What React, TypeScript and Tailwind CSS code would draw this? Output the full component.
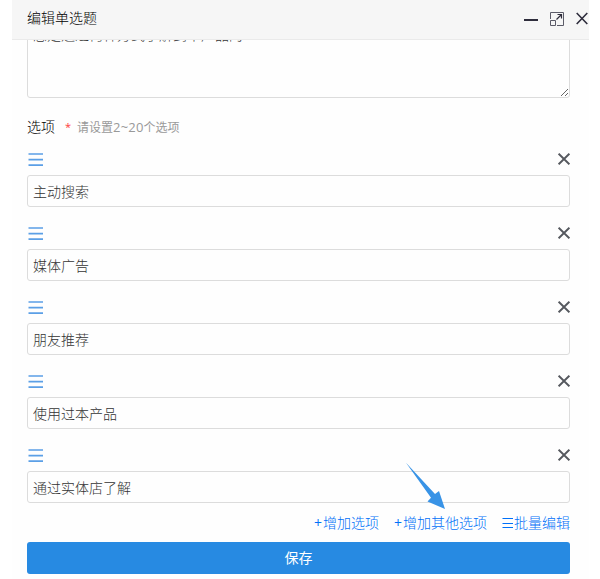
import React, { useState } from "react";

interface OptionItemProps {
  value: string;
  onChange: (value: string) => void;
  onRemove: () => void;
}

const OptionItem: React.FC<OptionItemProps> = ({ value, onChange, onRemove }) => {
  return (
    <div>
      <div className="flex h-8 items-center justify-between">
        <svg width="16" height="14" viewBox="0 0 16 14" className="mt-px ml-px cursor-move" fill="none" stroke="#5b9fe6" strokeWidth="1.7">
          <path d="M0.5 1H15M0.5 6.7H15M0.5 12.2H15" />
        </svg>
        <button type="button" onClick={onRemove} className="cursor-pointer">
          <svg width="12" height="14" viewBox="0 0 12 14" fill="none" stroke="#55585e" strokeWidth="2">
            <path d="M0.6 1.6L11.4 12.4M11.4 1.6L0.6 12.4" />
          </svg>
        </button>
      </div>
      <input
        type="text"
        value={value}
        onChange={(e) => onChange(e.target.value)}
        className="block h-8 w-full rounded-[3px] border border-[#dcdcdc] bg-[#fefefe] px-[5px] text-sm font-light text-[#333] outline-none"
      />
    </div>
  );
};

export default function App() {
  const [title, setTitle] = useState<string>("您是通过何种方式了解到本产品的");
  const [options, setOptions] = useState<string[]>([
    "主动搜索",
    "媒体广告",
    "朋友推荐",
    "使用过本产品",
    "通过实体店了解",
  ]);

  const updateOption = (index: number, value: string) => {
    setOptions(options.map((item, i) => (i === index ? value : item)));
  };

  const removeOption = (index: number) => {
    setOptions(options.filter((_, i) => i !== index));
  };

  return (
    <div className="h-[579px] w-[600px] overflow-hidden bg-white pl-3 font-['Open_Sans','Noto_Sans_CJK_SC',sans-serif]">
      <div className="flex h-full w-[577px] flex-col bg-[#fefefe]">
        {/* title bar */}
        <div className="flex h-10 shrink-0 items-center justify-between border-b border-[#eaeaea] bg-[#f6f6f6] pl-[15px]">
          <span className="-mt-1 text-sm font-light text-black">编辑单选题</span>
          <div className="-mt-px flex items-center text-[#2e2d3c]">
            <span className="mt-0.5 mr-3 h-0.5 w-3.5 bg-[#2e2d3c]" />
            <svg width="14" height="14" viewBox="0 0 14 14" className="mr-3" fill="none" stroke="currentColor">
              <path d="M0.5 7V0.5H13.5V13.5H7" stroke="#5b5b68" />
              <path d="M0.5 8.5H5.5V13.5H0.5Z" stroke="#5b5b68" />
              <path d="M6.5 7.5L11 3M7.5 2.5H11.5V6.5" strokeWidth="1.2" />
            </svg>
            <svg width="13" height="14" viewBox="0 0 13 14" fill="none" stroke="currentColor" strokeWidth="1.6">
              <path d="M0.7 1L11.3 12M11.3 1L0.7 12" />
            </svg>
          </div>
        </div>

        <div className="min-h-0 flex-1 overflow-hidden pr-[19px] pl-[15px]">
          <textarea
            value={title}
            onChange={(e) => setTitle(e.target.value)}
            className="-mt-5 block h-[78px] w-full resize rounded-[3px] border border-[#dcdcdc] bg-[#fefefe] px-[5px] py-1 text-sm font-light text-[#333] outline-none"
          />

          <div className="mt-[17px] flex h-6 items-center">
            <span className="text-sm font-light text-black">选项</span>
            <span className="ml-2.5 w-3 text-[11px] text-[#ff3b3b]">*</span>
            <span className="mt-0.5 text-xs text-[#999]">
              请设置<span className="text-[13px] tracking-[0.2px]">2~20</span>个选项
            </span>
          </div>

          <div className="mt-1 flex flex-col gap-2.5">
            {options.map((item, i) => (
              <OptionItem
                key={i}
                value={item}
                onChange={(value) => updateOption(i, value)}
                onRemove={() => removeOption(i)}
              />
            ))}
          </div>

          <div className="relative flex h-[39px] items-center justify-end gap-[15px] text-sm font-light text-[#0070f8]">
            <a className="flex cursor-pointer" onClick={() => setOptions([...options, ""])}>
              <span className="w-[9px] font-normal">+</span>增加选项
            </a>
            <a className="flex cursor-pointer">
              <span className="w-[9px] font-normal">+</span>增加其他选项
            </a>
            <a className="flex cursor-pointer items-center">
              <svg width="12" height="12" viewBox="0 0 12 12" fill="none" stroke="currentColor">
                <path d="M0.5 1.5H11M0.5 6.5H11M0.5 10.5H11" />
              </svg>
              批量编辑
            </a>

            {/* pointer arrow */}
            <svg width="40" height="48" viewBox="0 0 40 48" className="absolute -top-[41px] left-[379px]" fill="#3893e6">
              <path d="M0 0.8L29 32L33 29L39 47L21.5 39.5L25 35.7Z" />
            </svg>
          </div>

          <button type="button" className="block h-8 w-full cursor-pointer rounded-[3px] bg-[#278ae2] text-sm text-white">
            保存
          </button>
        </div>
      </div>
    </div>
  );
}
